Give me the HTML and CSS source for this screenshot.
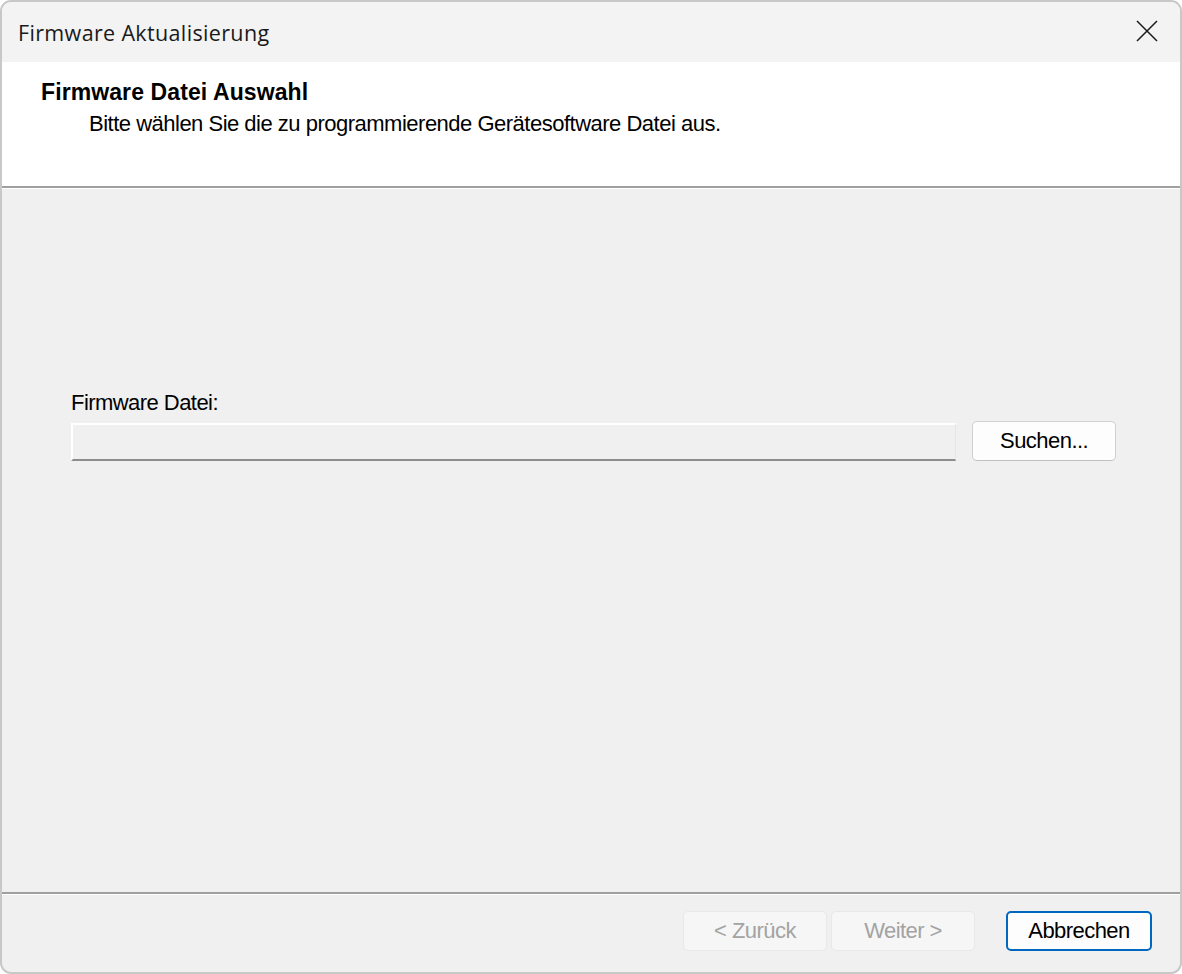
FILE: index.html
```html
<!DOCTYPE html>
<html lang="de">
<head>
<meta charset="utf-8">
<title>Firmware Aktualisierung</title>
<link rel="stylesheet" href="styles.css">
</head>
<body>
<div class="window">
  <div class="titlebar">
    <span class="title">Firmware Aktualisierung</span>
    <span class="close" aria-label="Schließen">
      <svg width="22" height="22" viewBox="0 0 22 22"><path d="M1 1 L21 21 M21 1 L1 21" stroke="#1a1a1a" stroke-width="1.5" fill="none"/></svg>
    </span>
  </div>
  <div class="header">
    <div class="heading">Firmware Datei Auswahl</div>
    <div class="subtitle">Bitte wählen Sie die zu programmierende Gerätesoftware Datei aus.</div>
  </div>
  <div class="sep"></div>
  <div class="content">
    <div class="field">
      <div class="label">Firmware Datei:</div>
      <div class="row">
        <div class="input"></div>
        <button class="btn">Suchen...</button>
      </div>
    </div>
  </div>
  <div class="sep"></div>
  <div class="footer">
    <button class="btn disabled">&lt; Zurück</button>
    <button class="btn disabled">Weiter &gt;</button>
    <button class="btn primary">Abbrechen</button>
  </div>
</div>
</body>
</html>
```

FILE: styles.css
```css
html, body {
  margin: 0;
  padding: 0;
  background: #ffffff;
}
.window {
  width: 1182px;
  height: 974px;
  box-sizing: border-box;
  border: 2px solid #c8c8c8;
  border-radius: 11px;
  overflow: hidden;
  display: flex;
  flex-direction: column;
  background: #f0f0f0;
  font-family: "Liberation Sans", Arial, sans-serif;
  color: #000;
}
.titlebar {
  height: 60px;
  flex: none;
  background: #f3f3f3;
  display: flex;
  align-items: center;
  justify-content: space-between;
  padding: 0 22px 0 16px;
}
.title {
  font-family: "Open Sans", "Noto Sans", sans-serif;
  font-size: 21.5px;
  letter-spacing: 0.35px;
  color: #1a1a1a;
}
.close {
  display: flex;
  width: 22px;
  height: 22px;
  margin-top: -2px;
}
.header {
  height: 124px;
  flex: none;
  background: #ffffff;
  box-sizing: border-box;
  padding: 17px 0 0 39px;
}
.heading {
  font-weight: bold;
  font-size: 23px;
  line-height: 26px;
  letter-spacing: 0.1px;
}
.subtitle {
  font-size: 22px;
  line-height: 26px;
  letter-spacing: -0.5px;
  margin: 6px 0 0 48px;
}
.sep {
  flex: none;
  height: 2px;
  background: #a0a0a0;
  border-bottom: 1px solid #ffffff;
}
.content {
  flex: 1;
  padding: 201px 64px 0 69px;
}
.label {
  font-size: 22px;
  line-height: 26px;
  letter-spacing: -0.55px;
  margin-bottom: 5px;
}
.row {
  display: flex;
  align-items: flex-end;
  gap: 16px;
}
.input {
  width: 886px;
  height: 38px;
  box-sizing: border-box;
  background: #f0f0f0;
  border-top: 2px solid #ffffff;
  border-left: 2px solid #ffffff;
  border-right: 1px solid #e6e6e6;
  border-bottom: 2px solid #8c8c8c;
}
.btn {
  width: 144px;
  height: 40px;
  box-sizing: border-box;
  background: #fdfdfd;
  border: 1px solid #d0d0d0;
  border-bottom-color: #c0c0c0;
  border-radius: 5px;
  font-family: "Liberation Sans", Arial, sans-serif;
  font-size: 22px;
  letter-spacing: -0.55px;
  color: #000;
  padding: 0;
}
.footer {
  height: 77px;
  flex: none;
  display: flex;
  align-items: flex-start;
  padding: 16px 0 0 681px;
  box-sizing: border-box;
  gap: 4px;
}
.btn.disabled {
  background: #f6f6f6;
  border: 1px solid #e8e8e8;
  color: #a3a3a3;
}
.btn.primary {
  margin-left: 27px;
  width: 146px;
  border: 2px solid #0067c0;
  border-radius: 5px;
}
```
